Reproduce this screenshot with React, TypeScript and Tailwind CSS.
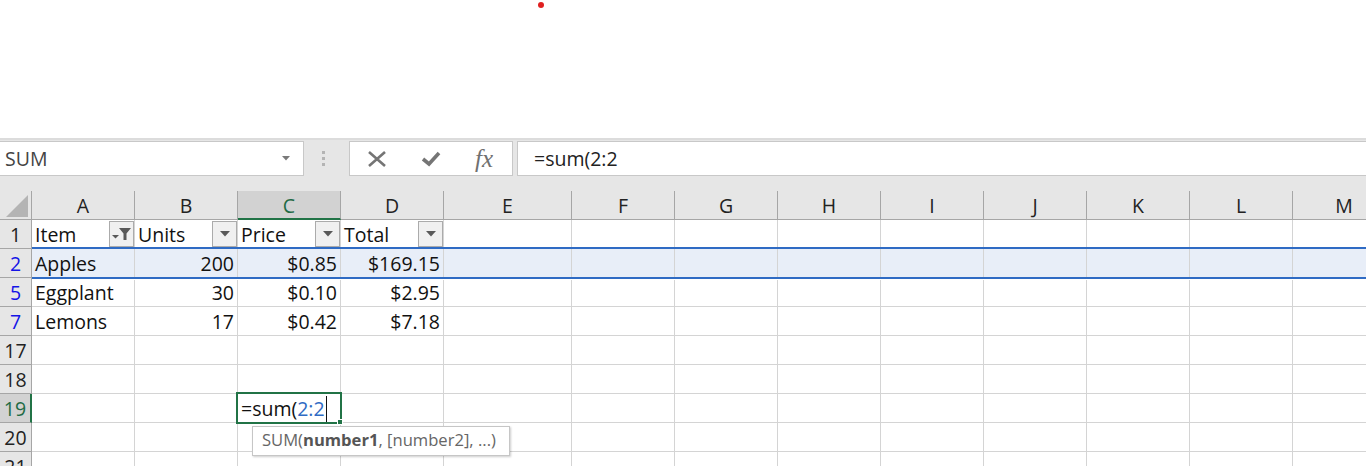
import React from "react";

const FONT = "font-['Open_Sans','Noto_Sans',sans-serif]";
const COLUMNS = ["A", "B", "C", "D", "E", "F", "G", "H", "I", "J", "K", "L", "M"];

interface SheetRow {
	id: string;
	filtered?: boolean;
	cells: string[];
}

const ROWS: SheetRow[] = [
	{ id: "1", cells: ["Item", "Units", "Price", "Total"] },
	{ id: "2", filtered: true, cells: ["Apples", "200", "$0.85", "$169.15"] },
	{ id: "5", filtered: true, cells: ["Eggplant", "30", "$0.10", "$2.95"] },
	{ id: "7", filtered: true, cells: ["Lemons", "17", "$0.42", "$7.18"] },
	{ id: "17", cells: [] },
	{ id: "18", cells: [] },
	{ id: "19", cells: [] },
	{ id: "20", cells: [] },
	{ id: "21", cells: [] },
];

const FilterButton = ({ active }: { active?: boolean }) => (
	<div className="-mr-[3px] ml-auto flex h-[26px] w-[25px] shrink-0 items-center justify-center border border-[#ababab] bg-[#f0f0f0]">
		{active ? (
			<svg width="20" height="15" viewBox="0 0 20 15">
				<path d="M7 1h12l-4.500 5.500V13h-3V6.500z" fill="#595959" />
				<path d="M0 8h7l-3.500 3.500z" fill="#595959" />
			</svg>
		) : (
			<svg width="10" height="6" viewBox="0 0 10 6">
				<path d="M0 0h10L5 5.500z" fill="#595959" />
			</svg>
		)}
	</div>
);

const FormulaBar = () => (
	<div className="flex h-[53px] items-start border-t-2 border-[#dcdcdc] bg-[#e6e6e6] pt-[1px]">
		<div className="flex h-[35px] w-[304px] items-center border border-l-0 border-[#c8c8c8] bg-white pl-[5px] pr-[13px] text-[19.500px] text-[#444]">
			SUM
			<svg className="ml-auto" width="8" height="5" viewBox="0 0 8 5">
				<path d="M0 0h8L4 4.500z" fill="#7a7a7a" />
			</svg>
		</div>
		<div className="ml-[18px] mt-[10px] flex w-[4px] flex-col gap-[3px]">
			<span className="h-[3px] w-[3px] bg-[#b4b4b4]" />
			<span className="h-[3px] w-[3px] bg-[#b4b4b4]" />
			<span className="h-[3px] w-[3px] bg-[#b4b4b4]" />
		</div>
		<div className="ml-[23px] flex h-[35px] w-[164px] items-center border border-[#c8c8c8] bg-white pl-[18px]">
			<svg width="18" height="16" viewBox="0 0 18 16">
				<path d="M1 1l16 14M17 1L1 15" stroke="#757575" strokeWidth="2.600" fill="none" />
			</svg>
			<svg className="ml-[35px]" width="20" height="16" viewBox="0 0 20 16">
				<path d="M2 8l6 5L18 2" stroke="#757575" strokeWidth="3.600" fill="none" />
			</svg>
			<span className="ml-[34px] font-['Liberation_Serif',serif] text-[25px] italic leading-none text-[#707070]">
				fx
			</span>
		</div>
		<div className="ml-[4px] flex h-[35px] flex-1 items-center border border-r-0 border-[#c8c8c8] bg-white pl-[16px] text-[19.500px] text-[#222]">
			=sum(2:2
		</div>
	</div>
);

const HeaderRow = () => (
	<>
		<div className="flex h-[29px] items-end border-b border-r border-[#a6a6a6] bg-[#e6e6e6] pb-[2px] pl-[6px]">
			<svg width="22" height="22" viewBox="0 0 22 22">
				<path d="M22 0v22H0z" fill="#b4b4b4" />
			</svg>
		</div>
		{COLUMNS.map((col) => (
			<div
				key={col}
				className={`flex h-[29px] items-center justify-center border-r border-[#a6a6a6] pt-[2px] text-[19.500px] ${
					col === "C"
						? "border-b-2 border-b-[#217346] bg-[#d2d2d2] text-[#1f6b45]"
						: "border-b bg-[#e6e6e6] text-[#222]"
				}`}
			>
				{col}
			</div>
		))}
	</>
);

const Row = ({ row }: { row: SheetRow }) => {
	const selected = row.id === "2";
	const active = row.id === "19";
	return (
		<>
			<div
				className={`flex h-[29px] items-center justify-center border-b border-r border-[#a6a6a6] pt-[2px] text-[19.500px] ${
					active
						? "border-r-2 border-r-[#217346] bg-[#d2d2d2] text-[#1f6b45]"
						: row.filtered
							? "bg-[#e6e6e6] text-[#1414e6]"
							: "bg-[#e6e6e6] text-[#222]"
				}`}
			>
				{row.id}
			</div>
			{COLUMNS.map((col, i) => {
				const text = row.cells[i];
				return (
					<div
						key={col}
						className={`flex h-[29px] items-center overflow-hidden border-b border-r border-[#d4d4d4] px-[3px] text-[19.500px] text-[#111] ${
							selected ? "bg-[#e8eef8]" : "bg-white"
						} ${row.id !== "1" && i > 0 ? "justify-end" : ""}`}
					>
						<span className="pt-[2px]">{text}</span>
						{row.id === "1" && text && <FilterButton active={i === 0} />}
					</div>
				);
			})}
		</>
	);
};

export default function App() {
	return (
		<div className={`h-[466px] w-[1366px] overflow-hidden bg-white ${FONT}`}>
			<div className="h-[138px] pl-[538px] pt-[2px]">
				<div className="h-[6px] w-[6px] rounded-full bg-[#e02020]" />
			</div>
			<FormulaBar />
			<div className="relative">
				<div className="grid w-[1396px] grid-cols-[32px_103px_103px_103px_103px_128px_103px_103px_103px_103px_103px_103px_103px_103px]">
					<HeaderRow />
					{ROWS.map((row) => (
						<Row key={row.id} row={row} />
					))}
				</div>

				{/* filtered row selection lines */}
				<div className="absolute left-[32px] right-0 top-[56px] h-[2px] bg-[#2f6bc4]" />
				<div className="absolute left-[32px] right-0 top-[86px] h-[3px] border-b border-white bg-[#2f6bc4]" />

				{/* cell being edited */}
				<div className="absolute left-[236px] top-[201px] flex h-[32px] w-[106px] items-center border-2 border-[#217346] bg-white pl-[3px] pt-[1px] text-[19.500px] text-[#111]">
					=sum(<span className="text-[#2f6bc4]">2:2</span>
					<span className="ml-[1px] h-[26px] w-[1px] bg-[#111]" />
					<span className="absolute -bottom-[3px] -right-[3px] h-[6px] w-[6px] border border-white bg-[#217346]" />
				</div>

				{/* function argument tip */}
				<div className="absolute left-[252px] top-[235px] flex h-[30px] w-[258px] items-center border border-[#c6c6c6] bg-white pb-[2px] pl-[9px] text-[16.600px] text-[#666] shadow-[1px_1px_2px_rgba(0,0,0,0.2)]">
					SUM(<b className="font-bold text-[#555]">number1</b>, [number2], ...)
				</div>
			</div>
		</div>
	);
}
